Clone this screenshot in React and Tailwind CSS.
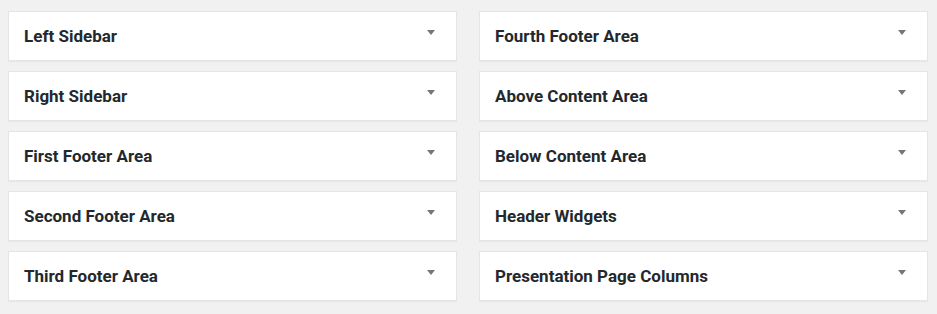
import React from "react";

const left = ["Left Sidebar", "Right Sidebar", "First Footer Area", "Second Footer Area", "Third Footer Area"];
const right = ["Fourth Footer Area", "Above Content Area", "Below Content Area", "Header Widgets", "Presentation Page Columns"];

function Panel({ title }) {
  return (
    <div className="h-[50px] bg-white border border-[#e5e5e5] shadow-[0_1px_1px_rgba(0,0,0,0.04)] flex justify-between pl-[15px] pr-[21px]">
      <h2 className="self-center text-[17px] font-bold text-[#23282d] leading-none">{title}</h2>
      <svg className="mt-[18px]" width="8" height="5" viewBox="0 0 8 5">
        <polygon points="0,0 8,0 4,5" fill="#72777c" />
      </svg>
    </div>
  );
}

export default function App() {
  const rows = left.flatMap((t, i) => [t, right[i]]);
  return (
    <div className="w-[937px] h-[314px] bg-[#f1f1f1] px-[8px] pt-[11px] font-['Roboto',sans-serif]">
      <div className="grid grid-cols-[449px_449px] gap-x-[22px] gap-y-[10px]">
        {rows.map((t) => (
          <Panel key={t} title={t} />
        ))}
      </div>
    </div>
  );
}
